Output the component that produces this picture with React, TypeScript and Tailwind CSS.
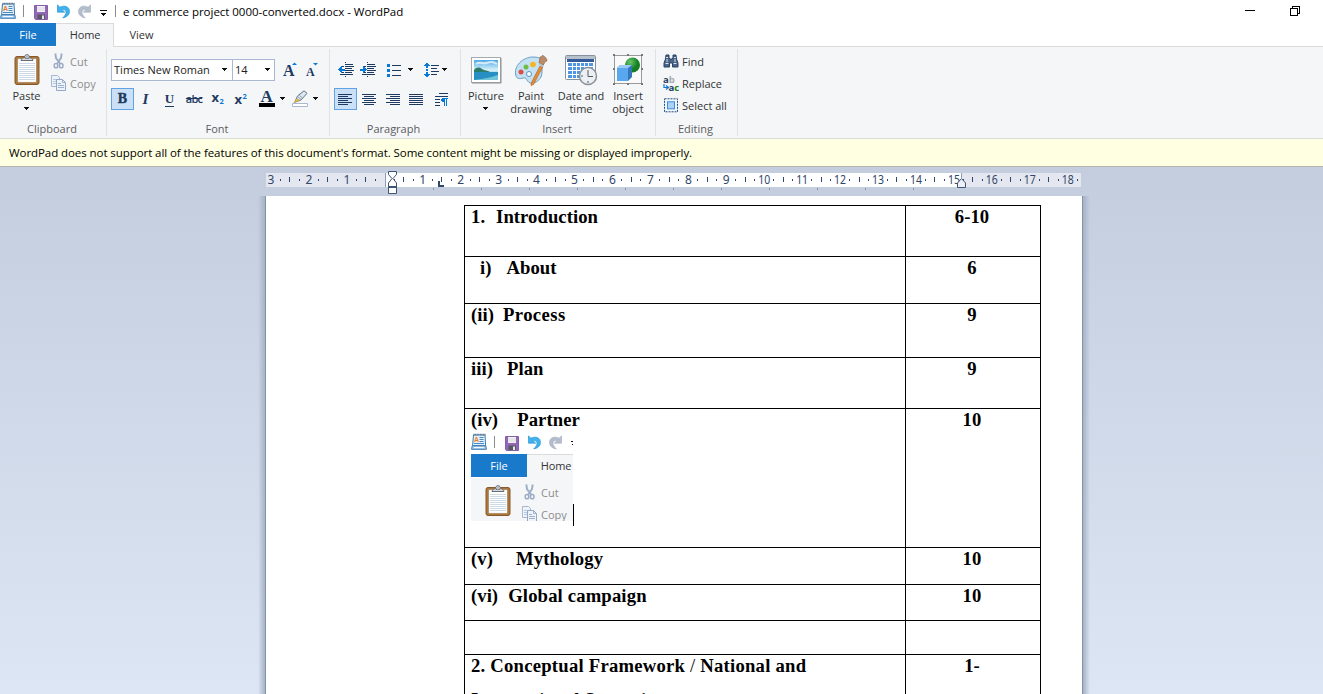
import type { ReactNode } from "react";

const NAVY = "#1f3a60";
const BLUE = "#0a78d6";

function Caret({ className = "" }: { className?: string }) {
  return (
    <svg width="7" height="4" viewBox="0 0 7 4" className={`shrink-0 ${className}`} shapeRendering="crispEdges">
      <path d="M1 0h5v1H1zM2 1h3v1H2zM3 2h1v1H3z" fill="#111" />
    </svg>
  );
}

function WordPadIcon() {
  return (
    <svg width="16" height="18" viewBox="0 0 16 18" className="shrink-0">
      <path d="M2.500 2h11.500l.6 10.500H1.600z" fill="#e3f1fc" stroke="#3f78ad" />
      <path d="M2.500 1.500h12" stroke="#5c6c80" strokeWidth="1.400" strokeDasharray="1 .6" />
      <path d="M1.200 12.800h13.600l.6 3.500H.6z" fill="#a9d2f2" stroke="#3f78ad" />
      <path d="M3 14.500h10" stroke="#f2f9ff" />
      <text x="3" y="9" fontSize="7" fontWeight="700" fontFamily="Liberation Sans, sans-serif" fill="#ef7d22">A</text>
      <path d="M8.500 4.500h4M8.500 6.500h4M3 10.500h10M8.500 8.500h4" stroke="#4d8ac0" />
    </svg>
  );
}

function SaveIcon() {
  return (
    <svg width="14" height="15" viewBox="0 0 14 15" className="shrink-0">
      <path d="M.5.5h13v14H1.500l-1-1z" fill="#9367b8" stroke="#8460aa" />
      <path d="M3 1h8v6H3z" fill="#f2f2f5" />
      <path d="M3 3h8M3 5h8" stroke="#cfcfd8" strokeWidth=".7" />
      <path d="M3.500 9.500h7.500V14H3.500z" fill="#57595f" />
      <path d="M8 10.500h2V14H8z" fill="#e5e5ec" />
    </svg>
  );
}

function UndoIcon({ redo = false }: { redo?: boolean }) {
  return (
    <svg width="15" height="15" viewBox="0 0 15 15" className={redo ? "shrink-0 -scale-x-100" : "shrink-0"}>
      <path
        d="M1.500.8v7.400h7.200L6.300 5.900C8.300 5 10 6.200 10 8.300c0 2-1.300 3.600-3.300 5.600 4-.6 6.800-3 6.800-6.500C13.500 2.600 8.500.800 3.800 3.200z"
        fill={redo ? "#b3bdcb" : "#3fb2ee"}
        stroke={redo ? "#a3afc0" : "#1b8ccd"}
        strokeWidth=".6"
      />
    </svg>
  );
}

function ClipboardIcon() {
  return (
    <svg width="26" height="31" viewBox="0 0 26 31" className="shrink-0">
      <rect x="1" y="2.500" width="24" height="28" rx="2" fill="#aa763c" stroke="#855a2c" />
      <rect x="4" y="5" width="18" height="23" fill="#fff" stroke="#d9dde3" strokeWidth=".5" />
      <path d="M5 9.500h16M5 11.500h16M5 13.500h16M5 15.500h16M5 17.500h16M5 19.500h16M5 21.500h16M5 23.500h16M5 25.500h16" stroke="#bfcfdf" strokeWidth=".8" />
      <path d="M7 6.500c0-2 2-2.500 3.500-3C10.500 1.500 11.500.7 13 .7s2.500.8 2.500 2.800c1.500.5 3.500 1 3.500 3z" fill="#d5d9dd" stroke="#5b5f65" strokeWidth=".9" />
      <path d="M11 4.500c0-2 4-2 4 0z" fill="#fff" stroke="#5b5f65" strokeWidth=".7" />
    </svg>
  );
}

function CutIcon() {
  return (
    <svg width="12" height="16" viewBox="0 0 12 16" className="shrink-0">
      <path d="M2.300.5 3 5l4.600 6M8.700.5 8 5 4 11" fill="none" stroke="#9dadc6" strokeWidth="1.900" />
      <ellipse cx="3" cy="12.700" rx="1.800" ry="2.100" fill="none" stroke="#9dadc6" strokeWidth="1.500" />
      <ellipse cx="8.200" cy="12.700" rx="1.800" ry="2.100" fill="none" stroke="#9dadc6" strokeWidth="1.500" />
    </svg>
  );
}

function CopyIcon() {
  return (
    <svg width="16" height="16" viewBox="0 0 16 16" className="shrink-0">
      <path d="M.5.5h6l2 2v9h-8z" fill="#eef3fa" stroke="#a6b8d1" />
      <path d="M2 4.500h4M2 6.500h4M2 8.500h4" stroke="#b8c8de" />
      <path d="M5.500 4.500h6l3 3v8h-9z" fill="#eef3fa" stroke="#93a8c6" />
      <path d="M11.500 4.500v3h3M7 8.500h3M7 10.500h6M7 12.500h6" fill="none" stroke="#9db2cf" />
    </svg>
  );
}

function QuickBar() {
  return (
    <div className="flex h-[23px] items-center">
      <div className="flex w-[23px] items-center pb-px"><WordPadIcon /></div>
      <div className="mb-px h-3 w-px bg-[#8c8c8c]" />
      <div className="ml-[10px] mt-px flex"><SaveIcon /></div>
      <div className="ml-[8px] flex"><UndoIcon /></div>
      <div className="ml-[6px] flex"><UndoIcon redo /></div>
      <svg width="7" height="6" viewBox="0 0 7 6" className="ml-[8px] mt-[3px] shrink-0" shapeRendering="crispEdges">
        <path d="M0 0h7v1H0zM1 3h5v1H1zM2 4h3v1H2zM3 5h1v1H3z" fill="#111" />
      </svg>
      <div className="mb-px ml-[8px] h-3 w-px shrink-0 bg-[#8c8c8c]" />
    </div>
  );
}

function Tabs() {
  return (
    <div className="flex h-6 shrink-0 text-[11px] leading-[23px] text-[#333]">
      <div className="h-[23px] w-14 shrink-0 bg-[#1979ca] text-center text-white">File</div>
      <div className="w-[58px] shrink-0 border-r border-t border-[#dadbdc] bg-[#f4f6f8] pl-px text-center leading-[22px] tracking-[-0.1px]">Home</div>
      <div className="w-[55px] shrink-0 border-b border-[#dadbdc] text-center">View</div>
      <div className="flex-1 border-b border-[#dadbdc]" />
    </div>
  );
}

function Group({ label, className, children }: { label: string; className: string; children: ReactNode }) {
  return (
    <div className={`flex h-[91px] shrink-0 flex-col ${className}`}>
      <div className="flex h-[73px] flex-col">{children}</div>
      <div className="h-[18px] pr-[2px] text-center leading-[18px] text-[#5c5c60]">{label}</div>
    </div>
  );
}

function Sep() {
  return <div className="mt-[2px] h-[87px] w-px shrink-0 bg-[#e1e2e4]" />;
}

function ClipboardGroup() {
  return (
    <Group label="Clipboard" className="w-[106px]">
      <div className="flex">
        <div className="flex w-[54px] flex-col items-center pt-[7px]">
          <ClipboardIcon />
          <span className="mt-[3px] pr-px leading-[15px]">Paste</span>
          <Caret className="mr-px mt-[4px]" />
        </div>
        <div className="-ml-px flex flex-col pt-[5px] text-[#8d8d8d]">
          <div className="flex h-[18px] items-center"><CutIcon /><span className="ml-[5px]">Cut</span></div>
          <div className="mt-[4px] flex h-[18px] items-center"><div className="-ml-[2px] flex"><CopyIcon /></div><span className="ml-[3px]">Copy</span></div>
        </div>
      </div>
    </Group>
  );
}

function GrowIcon({ up }: { up: boolean }) {
  return (
    <svg width="15" height="16" viewBox="0 0 15 16" className="shrink-0">
      <text x="0" y={up ? 15 : 14.5} fontSize={up ? 16 : 12} fontWeight="700" fontFamily="Liberation Serif, serif" fill={NAVY}>A</text>
      <path d={up ? "M9 4h5l-2.500-2.600z" : "M7 2h5L9.500 4.500z"} fill={BLUE} />
    </svg>
  );
}

function FontGroup() {
  return (
    <Group label="Font" className="w-[222px]">
      <div className="flex pl-1 pt-3">
        <div className="flex h-[22px] w-[122px] items-center justify-between border border-[#a9b9d4] bg-white pb-px pl-[2px] pr-[4px] text-[#222]">
          <span className="tracking-[0.02px]">Times New Roman</span><Caret />
        </div>
        <div className="-ml-px flex h-[22px] w-[43px] items-center justify-between border border-[#a9b9d4] bg-white pb-px pl-[2px] pr-[3px] text-[#222]">
          <span>14</span><Caret />
        </div>
        <div className="ml-2 flex pt-[2px]"><GrowIcon up /><div className="ml-2"><GrowIcon up={false} /></div></div>
      </div>
      <div className="mt-[7px] flex h-[22px] items-center pl-1 font-['Liberation_Serif',serif] text-[#1f3a60]">
        <div className="h-[22px] w-[23px] border border-[#62a2e4] bg-[#c9e0f7] text-center text-[14px] font-bold leading-[20px] [-webkit-text-stroke:0.4px_#1f3a60]">B</div>
        <div className="w-[23px] text-center text-[15px] font-bold italic leading-[20px]">I</div>
        <div className="w-[25px] text-center text-[13px] font-bold leading-[18px]"><span className="border-b border-[#1f3a60]">U</span></div>
        <div className="w-[24px] text-center font-['Open_Sans',sans-serif] text-[11px] font-semibold leading-[20px] tracking-[-0.8px] line-through">abc</div>
        <svg width="25" height="20" viewBox="0 0 25 20" className="shrink-0">
          <text x="5.500" y="12.500" fontSize="13" fontWeight="700" fontFamily="Open Sans, sans-serif" fill={NAVY}>x</text>
          <text x="13.500" y="14.500" fontSize="7.500" fontWeight="700" fontFamily="Open Sans, sans-serif" fill={BLUE}>2</text>
        </svg>
        <svg width="22" height="20" viewBox="0 0 22 20" className="shrink-0">
          <text x="3.500" y="15" fontSize="13" fontWeight="700" fontFamily="Open Sans, sans-serif" fill={NAVY}>x</text>
          <text x="11.500" y="9.500" fontSize="7.500" fontWeight="700" fontFamily="Open Sans, sans-serif" fill={BLUE}>2</text>
        </svg>
        <svg width="24" height="20" viewBox="0 0 24 20" className="shrink-0">
          <text x="7.500" y="13" fontSize="17" fontWeight="700" fontFamily="Liberation Serif, serif" fill={NAVY}>A</text>
          <path d="M6 14h16v4H6z" fill="#000" />
        </svg>
        <Caret className="ml-[2px]" />
        <svg width="18" height="20" viewBox="0 0 18 20" className="ml-[6px] shrink-0">
          <path d="M3 13 5.500 7 12 1.800 15 4.300 9 11z" fill="#dfe7ef" stroke="#5f748d" />
          <path d="M2 13.800 4.500 9.500l3.500 2z" fill="#e9c34e" stroke="#a48640" strokeWidth=".5" />
          <path d="m5.500 7.500 3.500 3M7.500 6.500l3 2.500" stroke="#8fa1b4" />
          <path d="M.5 14.500h15v3H.5z" fill="#fff" stroke="#a9b9d4" />
        </svg>
        <Caret className="ml-[2px]" />
      </div>
    </Group>
  );
}

function Indent({ out }: { out: boolean }) {
  return (
    <svg width="17" height="16" viewBox="0 0 17 16" className="shrink-0" shapeRendering="crispEdges">
      <path d="M8 2.500h7M8 4.500h8M8 6.500h6M8 8.500h8M8 10.500h6M2 12.500h13M3 4.500h3M3 10.500h3" stroke={NAVY} />
      <path d="M7.500 0v16" stroke={NAVY} strokeDasharray="1 1" />
      {out ? <path d="M0 7.500l4-4v3h3v2H4v3z" fill={BLUE} /> : <path d="M7 7.500l-4-4v3H0v2h3v3z" fill={BLUE} />}
    </svg>
  );
}

function Align({ d }: { d: string }) {
  return (
    <svg width="15" height="13" viewBox="0 0 15 13" className="shrink-0" shapeRendering="crispEdges">
      <path d={d} stroke={NAVY} />
    </svg>
  );
}

function ParagraphGroup() {
  return (
    <Group label="Paragraph" className="w-[130px] pl-1 pr-[5px]">
      <div className="flex h-[34px] items-center pt-[12px]">
        <div className="ml-[4px]"><Indent out /></div>
        <div className="ml-[5px]"><Indent out={false} /></div>
        <svg width="15" height="15" viewBox="0 0 15 15" className="ml-[10px] shrink-0" shapeRendering="crispEdges">
          <path d="M0 1h3v3H0zM0 6h3v3H0zM0 11h3v3H0z" fill={BLUE} />
          <path d="M5 2.500h9M5 7.500h9M5 12.500h9" stroke={NAVY} />
        </svg>
        <Caret className="ml-[5px]" />
        <svg width="16" height="16" viewBox="0 0 16 16" className="ml-[10px] shrink-0" shapeRendering="crispEdges">
          <path d="M3 0l3 4H4v2H2V4H0zM3 16l3-4H4v-2H2v2H0z" fill={BLUE} />
          <path d="M3 7v2" stroke={BLUE} strokeWidth="2" />
          <path d="M7 3.500h8M7 6.500h6M7 9.500h8M7 12.500h6" stroke={NAVY} />
        </svg>
        <Caret className="ml-[1px]" />
      </div>
      <div className="mt-[7px] flex h-[22px] items-center">
        <div className="flex h-[22px] w-[23px] shrink-0 items-center justify-center border border-[#62a2e4] bg-[#c9e0f7]">
          <Align d="M0 1.500h14M0 3.500h10M0 5.500h14M0 7.500h10M0 9.500h14M0 11.500h10" />
        </div>
        <div className="ml-[5px]"><Align d="M0 1.500h14M2 3.500h10M0 5.500h14M2 7.500h10M0 9.500h14M2 11.500h10" /></div>
        <div className="ml-[9px]"><Align d="M0 1.500h14M4 3.500h10M0 5.500h14M4 7.500h10M0 9.500h14M4 11.500h10" /></div>
        <div className="ml-[8px]"><Align d="M0 1.500h14M0 3.500h14M0 5.500h14M0 7.500h14M0 9.500h14M0 11.500h14" /></div>
        <svg width="15" height="15" viewBox="0 0 15 15" className="ml-[11px] shrink-0" shapeRendering="crispEdges">
          <path d="M4 1.500h9M0 4.500h13M0 7.500h5M0 10.500h5M0 13.500h5" stroke={NAVY} />
          <path d="M7 6h6v1h-1v7h-1V7h-1v7H9v-4H7V9H6V7h1z" fill={BLUE} />
        </svg>
      </div>
    </Group>
  );
}

function PictureIcon() {
  return (
    <svg width="32" height="32" viewBox="0 0 32 32">
      <defs>
        <linearGradient id="sky" x1="0" y1="0" x2="0" y2="1">
          <stop offset="0" stopColor="#4ea8e4" /><stop offset=".5" stopColor="#d8f1fb" /><stop offset="1" stopColor="#1b87c0" />
        </linearGradient>
      </defs>
      <rect x="1.500" y="3.500" width="29" height="25" fill="#fff" stroke="#a7aaad" />
      <path d="M2 29h29V4" fill="none" stroke="#8b8e91" />
      <rect x="4" y="6" width="24" height="20" fill="url(#sky)" />
      <path d="M4 16c3-3 5-3 8-1s5 1 8 3H4z" fill="#2c7c68" />
      <path d="M4 18h24v8H4z" fill="#278fc2" />
      <path d="M4 26c8-1 15-2 24-5v5z" fill="#71c5d6" />
      <path d="M6 10c4-3 6 0 10-1s6-2 11 1" fill="none" stroke="#fff" strokeWidth="2" opacity=".7" />
    </svg>
  );
}

function PaintIcon() {
  return (
    <svg width="34" height="32" viewBox="0 0 34 32">
      <path d="M2 22C-1 12 9 3 19 3c9 0 12 4 10 8-2 5 0 7-2 12-2 4-7 7-11 6-4-2-3-6-7-5-3 1-6 1-7-2z" fill="#c4e1f4" stroke="#6a9fc5" />
      <circle cx="7" cy="18" r="2.500" fill="#dd4c45" /><circle cx="12" cy="13" r="2.500" fill="#6fbc46" /><circle cx="19" cy="10.500" r="2.800" fill="#f3b61d" />
      <circle cx="15" cy="20" r="2.500" fill="#fff" stroke="#5793bd" />
      <path d="m26 12 2.500 1.500-9 17-2.500 1 .5-3z" fill="#e58b36" stroke="#ba6724" strokeWidth=".7" />
      <path d="M26 3c2 0 1-1.500 3-1.500 2 1 4 3 4 5.500-2 0-2 2-4 4l-4-2z" fill="#ba8b66" stroke="#8a6144" strokeWidth=".6" />
      <path d="m25 10 4.500 2.500" stroke="#b9c3cc" strokeWidth="2" />
    </svg>
  );
}

function DateIcon() {
  return (
    <svg width="34" height="32" viewBox="0 0 34 32">
      <rect x="1.500" y="1.500" width="30" height="24" rx="1" fill="#fff" stroke="#86919e" />
      <path d="M2 2h29v3H2z" fill="#b5c0cd" /><path d="M3 5h27v3H3z" fill="#345b99" />
      <path d="M4 9h25v15H4z" fill="#4f97e5" />
      <path d="M4 12.500h25M4 16.500h25M4 20.500h25M8.500 9v15M12.500 9v15M16.500 9v15M20.500 9v15M24.500 9v15" stroke="#fff" />
      <circle cx="24" cy="22" r="8.500" fill="#edf0f2" stroke="#8b9299" strokeWidth="1.500" />
      <path d="M24 16v6.500h5M24 27v2M17 22h2" fill="none" stroke="#525a63" />
    </svg>
  );
}

function ObjectIcon() {
  return (
    <svg width="32" height="32" viewBox="0 0 32 32">
      <defs><radialGradient id="ball" cx=".35" cy=".3"><stop stopColor="#68c668" /><stop offset="1" stopColor="#148022" /></radialGradient></defs>
      <rect x="2.500" y="1.500" width="27" height="28" fill="#fafafa" stroke="#999" />
      <circle cx="20.500" cy="11" r="7.500" fill="url(#ball)" />
      <path d="m5 14 3-3h12v12l-4 4H5z" fill="#3577bc" /><path d="M5 14h11v13H5z" fill="#59a7ef" /><path d="m5 14 3-3h12l-4 3z" fill="#9acbf7" />
      <path d="M1 0h2v2H1zM29 0h2v2h-2zM1 29h2v2H1zM29 29h2v2h-2zM15 0h2v2h-2zM15 29h2v2h-2zM1 14h2v2H1zM29 14h2v2h-2z" fill="#777" />
    </svg>
  );
}

function InsertItem({ icon, className, children }: { icon: ReactNode; className: string; children: ReactNode }) {
  return (
    <div className={`flex shrink-0 flex-col items-center pt-[7px] ${className}`}>
      <div className="h-8">{icon}</div>
      <div className="mt-[3px] flex flex-col items-center whitespace-nowrap text-center leading-[13px]">{children}</div>
    </div>
  );
}

function InsertGroup() {
  return (
    <Group label="Insert" className="w-[194px]">
      <div className="flex pl-[2px]">
        <InsertItem icon={<PictureIcon />} className="w-[46px]"><span>Picture</span><Caret className="mt-[5px]" /></InsertItem>
        <InsertItem icon={<PaintIcon />} className="w-[44px]"><span>Paint</span><span>drawing</span></InsertItem>
        <InsertItem icon={<DateIcon />} className="w-[56px]"><span>Date and</span><span>time</span></InsertItem>
        <InsertItem icon={<ObjectIcon />} className="w-[38px]"><span>Insert</span><span>object</span></InsertItem>
      </div>
    </Group>
  );
}

function EditingGroup() {
  return (
    <Group label="Editing" className="w-[81px]">
      <div className="flex flex-col gap-[4px] whitespace-nowrap pl-[7px] pt-[5px]">
        <div className="flex h-[18px] items-center gap-[3px]">
          <svg width="16" height="16" viewBox="0 0 16 16">
            <path d="M3 2h3v3l1 1h2l1-1V2h3l.5 4L15 10v4H9.500v-4h-3v4H1v-4l1.500-4z" fill="#4a6386" stroke="#2b4365" />
            <path d="M3 4.500h2M11 4.500h2M2.500 10.500h3M10.500 10.500h3M4 6v3M12 6v3" stroke="#d7e2f0" />
          </svg>
          <span>Find</span>
        </div>
        <div className="flex h-[18px] items-center gap-[3px]">
          <svg width="16" height="17" viewBox="0 0 16 17" fontFamily="Open Sans, sans-serif" fontWeight="700" fontSize="9.500">
            <text x="0" y="8" fill={NAVY}>a<tspan fill="#aaa">b</tspan></text>
            <text x="5.500" y="16" fill={NAVY}>a<tspan fill="#138223">c</tspan></text>
            <path d="M1 9v3.500h4M3 10.500l2.500 2L3 14.500" fill="none" stroke={BLUE} strokeWidth="1.200" />
          </svg>
          <span>Replace</span>
        </div>
        <div className="flex h-[18px] items-center gap-[3px]">
          <svg width="16" height="15" viewBox="0 0 16 15">
            <rect x="1.500" y=".8" width="13" height="13" fill="none" stroke="#1b4f86" strokeDasharray="2 1" />
            <rect x="4.500" y="3.800" width="7" height="7" fill="#a9d3fb" stroke="#3d8edc" />
          </svg>
          <span>Select all</span>
        </div>
      </div>
    </Group>
  );
}

function Ruler() {
  const origin = 118.8;
  const cm = 37.94;
  const marks = Array.from({ length: 86 }, (_, i) => i - 12).filter((q) => q !== 0 && q <= 73);
  const stops = Array.from({ length: 11 }, (_, i) => 167.5 + i * 48);
  return (
    <svg width="816" height="29" viewBox="0 0 816 29" className="block shrink-0" fontFamily="Noto Sans, sans-serif" fontSize="12" fill="#30476b">
      <path d="M0 6h815v14H0z" fill="#e4e7ef" />
      <path d="M120 6h576v14H120z" fill="#fff" />
      <path d="M119.500 6v14" stroke="#8d9db4" />
      {marks.map((q) => {
        const x = origin + (q * cm) / 4;
        if (q % 4 === 0) {
          const label = String(Math.abs(q / 4));
          return (
            <text key={q} x={x} y="17.200" textAnchor="middle" textLength={label.length > 1 ? 12 : undefined} lengthAdjust="spacingAndGlyphs">
              {label}
            </text>
          );
        }
        if (q % 2 === 0) return <rect key={q} x={Math.round(x - 0.5)} y="10" width="1" height="5" />;
        return <rect key={q} x={Math.round(x - 0.5)} y="12" width="1" height="2" />;
      })}
      {stops.map((x) => <path key={x} d={`M${x} 21v2`} stroke="#8796ae" />)}
      <path d="M173 14v5h5" fill="none" stroke="#30476b" strokeWidth="2" />
      <path d="M122.500 4.500h8v3l-3.500 4 3.500 4.500v10.500h-8V16l3.500-4.500-3.500-4z" fill="#fff" stroke="#3e5575" />
      <path d="M122.500 20h8" stroke="#3e5575" strokeWidth="2" />
      <path d="m695.500 11.500-4 4.500v4.500h8V16z" fill="#edf0f6" stroke="#3e5575" />
      <path d="M695.500 6v6" stroke="#8d9db4" />
    </svg>
  );
}

function Row({ className, left, right }: { className: string; left: ReactNode; right: string }) {
  return (
    <div className={`flex shrink-0 border-b border-black ${className}`}>
      <div className="w-[442px] border-x border-black pl-[6px]">{left}</div>
      <div className="w-[135px] border-r border-black pr-[2px] text-center">{right}</div>
    </div>
  );
}

function ClippedCopy() {
  return (
    <div className="flex h-[90px] w-[102px] flex-col overflow-hidden font-['Open_Sans',sans-serif] text-[11px] font-normal tracking-normal">
      <div className="w-[300px]">
        <QuickBar />
        <Tabs />
        <div className="flex bg-[#f4f6f8] leading-[15px] text-[#333]"><ClipboardGroup /></div>
      </div>
    </div>
  );
}

export default function App() {
  return (
    <div className="flex h-[694px] w-[1323px] flex-col overflow-hidden bg-white font-['Open_Sans','Noto_Sans',sans-serif] text-[11px] leading-[15px] text-[#333]">
      <div className="flex h-[23px] shrink-0 items-center justify-between">
        <div className="flex items-center">
          <QuickBar />
          <span className="ml-[7px] text-[11.500px] tracking-[-0.03px] text-black">e commerce project 0000-converted.docx - WordPad</span>
        </div>
        <div className="flex items-center pb-[2px] pr-[23px]">
          <div className="h-px w-[10px] bg-black" />
          <svg width="10" height="10" viewBox="0 0 10 10" className="ml-[35px]" shapeRendering="crispEdges">
            <path d="M2.500 2.500v-2h7v7h-2M.5 2.500h7v7h-7z" fill="none" stroke="#000" />
          </svg>
        </div>
      </div>
      <Tabs />
      <div className="flex h-[92px] shrink-0 border-b border-[#d9dadc] bg-[#f4f6f8]">
        <ClipboardGroup /><Sep />
        <FontGroup /><Sep />
        <ParagraphGroup /><Sep />
        <InsertGroup /><Sep />
        <EditingGroup /><Sep />
      </div>
      <div className="h-7 shrink-0 border-b border-[#b5b7ad] bg-[#ffffe1] pl-[9px] text-[11.500px] leading-[27px] tracking-[-0.07px] text-black">
        WordPad does not support all of the features of this document's format. Some content might be missing or displayed improperly.
      </div>
      <div className="flex min-h-0 flex-1 flex-col bg-linear-to-b from-[#c4cdde] to-[#dce6f4]">
        <div className="pl-[266px]"><Ruler /></div>
        <div className="flex min-h-0 flex-1 pl-[258px]">
          <div className="w-[8px] border-r border-[#8594ab] bg-linear-to-r from-transparent to-[#a5b2c6]" />
          <div className="w-[816px] overflow-hidden bg-white pl-[198px] pt-[9px] font-['Liberation_Serif',serif] text-[18.670px] font-bold leading-[22px] tracking-[0.05px] text-black">
            <div className="flex w-[577px] flex-col whitespace-pre border-t border-black">
              <Row className="h-[51px]" right="6-10" left={<>1.<span className="ml-[11px]">Introduction</span></>} />
              <Row className="h-[47px]" right="6" left={<><span className="ml-[9px]">i)</span><span className="ml-[15px]">About</span></>} />
              <Row className="h-[54px]" right="9" left={<>(ii)<span className="ml-[9px] tracking-[0.4px]">Process</span></>} />
              <Row className="h-[51px]" right="9" left={<>iii)<span className="ml-[14px]">Plan</span></>} />
              <Row className="h-[139px]" right="10" left={
                <>
                  <div>(iv)<span className="ml-[19px] tracking-[0.1px]">Partner</span></div>
                  <div className="flex items-end"><ClippedCopy /><div className="-mb-[5px] h-[22px] w-px bg-black" /></div>
                </>
              } />
              <Row className="h-[37px]" right="10" left={<>(v)<span className="ml-[23px] tracking-[0.15px]">Mythology</span></>} />
              <Row className="h-[36px]" right="10" left={<>(vi)<span className="ml-[10px] tracking-[0.15px]">Global campaign</span></>} />
              <Row className="h-[34px]" right="" left="" />
              <Row className="h-[80px]" right="1-" left={<div className="tracking-[0.23px]"><div>2. Conceptual Framework <span className="font-normal">/</span> National and</div><div className="mt-[12px]">International Scenario</div></div>} />
            </div>
          </div>
          <div className="w-[8px] border-l border-[#8594ab] bg-linear-to-l from-transparent to-[#a5b2c6]" />
        </div>
      </div>
    </div>
  );
}
